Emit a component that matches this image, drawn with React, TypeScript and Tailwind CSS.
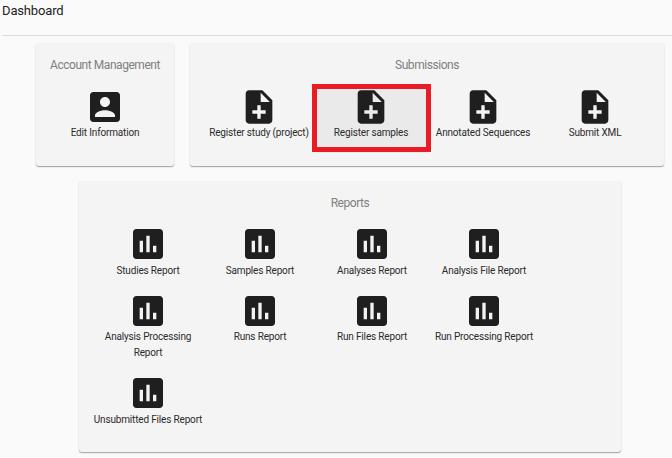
import type { ReactNode } from "react";

const ICONS = {
  account:
    "M3 5v14c0 1.1.89 2 2 2h14c1.1 0 2-.9 2-2V5c0-1.1-.9-2-2-2H5c-1.11 0-2 .9-2 2zm12 4c0 1.66-1.34 3-3 3s-3-1.34-3-3 1.34-3 3-3 3 1.34 3 3zm-9 8c0-2 4-3.1 6-3.1s6 1.1 6 3.1v1H6v-1z",
  noteAdd:
    "M14 2H6c-1.1 0-1.99.9-1.99 2L4 20c0 1.1.89 2 1.99 2H18c1.1 0 2-.9 2-2V8l-6-6zm2 14h-3v3h-2v-3H8v-2h3v-3h2v3h3v2zm-3-7V3.5L18.5 9H13z",
  report:
    "M19 3H5c-1.1 0-2 .9-2 2v14c0 1.1.9 2 2 2h14c1.1 0 2-.9 2-2V5c0-1.1-.9-2-2-2zM9 17H7v-7h2v7zm4 0h-2V7h2v10zm4 0h-2v-4h2v4z",
};

type TileProps = { icon: keyof typeof ICONS; label: string; active?: boolean };

function Tile({ icon, label, active = false }: TileProps) {
  return (
    <button
      type="button"
      className={`relative flex w-28 flex-col items-center pb-[12.25px] ${active ? "bg-[#eaeaea]" : ""}`}
    >
      <svg viewBox="0 0 24 24" className="size-10 fill-[#1f1f1f]" aria-hidden="true">
        <path d={ICONS[icon]} />
      </svg>
      <span className="-mt-[1.75px] w-28 px-px text-center text-[10px] leading-4 tracking-[-0.17px] text-[#2b2b2b]">
        {label}
      </span>
      {active && <span className="absolute -top-[2.5px] -left-[3px] h-[68px] w-[119px] border-[5px] border-[#e81c24]" />}
    </button>
  );
}

type CardProps = { title: string; className: string; children: ReactNode };

function Card({ title, className, children }: CardProps) {
  return (
    <section
      className={`flex flex-col items-center rounded-[3px] bg-[#f4f4f4] shadow-[0_1px_1px_rgba(0,0,0,0.28),0_1px_2px_rgba(0,0,0,0.1)] ${className}`}
    >
      <h2 className="text-xs leading-5 tracking-[-0.45px] text-[#808080]">{title}</h2>
      {children}
    </section>
  );
}

const submissions = ["Register study (project)", "Register samples", "Annotated Sequences", "Submit XML"];
const reports = [
  "Studies Report",
  "Samples Report",
  "Analyses Report",
  "Analysis File Report",
  "Analysis Processing Report",
  "Runs Report",
  "Run Files Report",
  "Run Processing Report",
  "Unsubmitted Files Report",
];

export default function App() {
  return (
    <main className="h-[458px] w-[672px] overflow-hidden bg-[#fafafa] font-['Roboto',sans-serif]">
      <header className="ml-0.5 h-9 border-b border-[#dcdcdc]">
        <h1 className="text-[13px] leading-[22px] tracking-[-0.15px] text-[#222]">Dashboard</h1>
      </header>
      <div className="flex gap-4 pt-[7px] pl-9">
        <Card title="Account Management" className="h-[123px] w-[138px] gap-[11.5px] pt-3">
          <Tile icon="account" label="Edit Information" />
        </Card>
        <Card title="Submissions" className="h-[123px] w-[474px] gap-[11.5px] pt-3">
          <div className="flex">
            {submissions.map((label) => (
              <Tile key={label} icon="noteAdd" label={label} active={label === "Register samples"} />
            ))}
          </div>
        </Card>
      </div>
      <Card title="Reports" className="mt-[15px] ml-[79px] h-[271px] w-[542px] gap-[11.25px] pt-3">
        <div className="grid w-full grid-cols-[repeat(4,112px)] items-start pl-[13px]">
          {reports.map((label) => (
            <Tile key={label} icon="report" label={label} />
          ))}
        </div>
      </Card>
    </main>
  );
}
